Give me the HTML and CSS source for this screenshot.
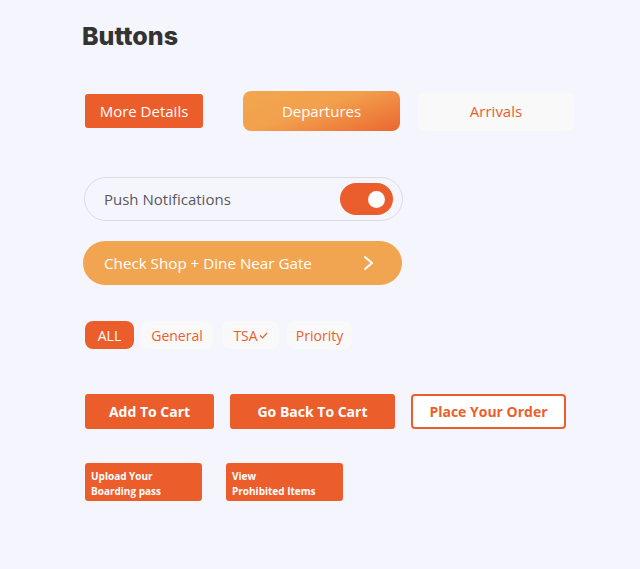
FILE: index.html
```html
<!DOCTYPE html>
<html>
<head>
<meta charset="utf-8">
<link rel="stylesheet" href="styles.css">
</head>
<body>
<div class="page">
  <h1 class="title">Buttons</h1>

  <div class="row row-top">
    <button class="btn btn-solid btn-details">More Details</button>
    <button class="btn btn-grad">Departures</button>
    <button class="btn btn-soft">Arrivals</button>
  </div>

  <div class="toggle-pill">
    <span class="toggle-label">Push Notifications</span>
    <span class="switch"><span class="knob"></span></span>
  </div>

  <div class="cta-pill">
    <span>Check Shop + Dine Near Gate</span>
    <svg class="chev" width="14" height="16" viewBox="0 0 14 16"><path d="M3 2 L10 8 L3 14" fill="none" stroke="#fff" stroke-width="2" stroke-linecap="round" stroke-linejoin="round"/></svg>
  </div>

  <div class="chips">
    <span class="chip chip-active">ALL</span>
    <span class="chip chip-general">General</span>
    <span class="chip chip-tsa">TSA<svg class="check" width="9" height="7" viewBox="0 0 9 7"><path d="M1 3.5 L3.5 6 L8 1" fill="none" stroke="#eb5e2c" stroke-width="1.2"/></svg></span>
    <span class="chip chip-priority">Priority</span>
  </div>

  <div class="row row-cart">
    <button class="btn bold btn-solid add">Add To Cart</button>
    <button class="btn bold btn-solid back">Go Back To Cart</button>
    <button class="btn bold btn-outline order">Place Your Order</button>
  </div>

  <div class="row row-small">
    <button class="small-btn upload">Upload Your<br>Boarding pass</button>
    <button class="small-btn view">View<br>Prohibited Items</button>
  </div>
</div>
</body>
</html>
```

FILE: styles.css
```css
* { box-sizing: border-box; }
html, body { margin: 0; padding: 0; }
body {
  background: #f5f6fd;
  font-family: "Open Sans", "Noto Sans", sans-serif;
  width: 640px;
  height: 569px;
  overflow: hidden;
}
.page {
  padding: 20px 0 0 82px;
}
.title {
  margin: 0;
  font-family: "Inter", sans-serif;
  font-weight: 800;
  font-size: 25px;
  line-height: 32px;
  color: #333333;
}
.row { display: flex; align-items: center; }
.btn {
  font-family: inherit;
  border: none;
  padding: 0;
  display: flex;
  align-items: center;
  justify-content: center;
  font-size: 15px;
  cursor: pointer;
}
.row-top { margin-top: 39px; margin-left: 3px; height: 40px; }
.btn-solid { background: #eb5e2c; color: #fff; border-radius: 3px; }
.btn-details { width: 118px; height: 34px; }
.btn-grad {
  margin-left: 40px;
  width: 157px;
  height: 40px;
  border-radius: 8px;
  color: #fff;
  background: linear-gradient(160deg, #f3a64f 0%, #f2a04d 45%, #eb6630 100%);
}
.btn-soft {
  margin-left: 18px;
  width: 156px;
  height: 39px;
  border-radius: 8px;
  background: #f9f9fa;
  color: #eb5e2c;
}
.toggle-pill {
  margin-top: 46px;
  margin-left: 2px;
  width: 319px;
  height: 44px;
  border: 1px solid #dcdcdf;
  border-radius: 22px;
  display: flex;
  align-items: center;
  justify-content: space-between;
  padding: 0 9px 0 19px;
}
.toggle-label { font-size: 15px; color: #58585c; }
.switch {
  width: 53px;
  height: 32px;
  border-radius: 16px;
  background: #eb5e2c;
  display: flex;
  align-items: center;
  justify-content: flex-end;
  padding-right: 8px;
}
.knob { width: 17px; height: 17px; border-radius: 50%; background: #fff; }
.cta-pill {
  margin-top: 20px;
  margin-left: 1px;
  width: 319px;
  height: 44px;
  border-radius: 22px;
  background: #f2a550;
  color: #fff;
  font-size: 15.2px;
  display: flex;
  align-items: center;
  justify-content: space-between;
  padding: 0 26px 0 21px;
}
.chev { display: block; }
.chips {
  margin-top: 36px;
  margin-left: 3px;
  display: flex;
  align-items: center;
}
.chip {
  height: 28px;
  display: flex;
  align-items: center;
  justify-content: center;
  border-radius: 8px;
  background: #f9f9fa;
  color: #eb5e2c;
  font-size: 14px;
}
.chip-active { width: 49px; background: #eb5e2c; color: #fff; }
.chip-general { width: 72px; margin-left: 7px; }
.chip-tsa { width: 57px; margin-left: 9px; }
.chip-priority { width: 65px; margin-left: 8px; }
.check { margin-left: 1px; margin-top: 1px; }
.row-cart { margin-top: 45px; margin-left: 3px; }
.bold { font-weight: 700; font-size: 14px; }
.add { width: 129px; height: 35px; }
.back { width: 165px; height: 35px; margin-left: 16px; }
.btn-outline {
  background: #fff;
  color: #eb5e2c;
  border: 2px solid #eb5e2c;
  border-radius: 4px;
}
.order { width: 155px; height: 35px; margin-left: 16px; }
.row-small { margin-top: 34px; margin-left: 3px; }
.small-btn {
  font-family: inherit;
  border: none;
  background: #eb5e2c;
  color: #fff;
  font-weight: 700;
  font-size: 10px;
  line-height: 15px;
  text-align: left;
  height: 38px;
  width: 117px;
  border-radius: 3px;
  padding: 3px 6px 0;
  display: block;
}
.view { margin-left: 24px; }
```
